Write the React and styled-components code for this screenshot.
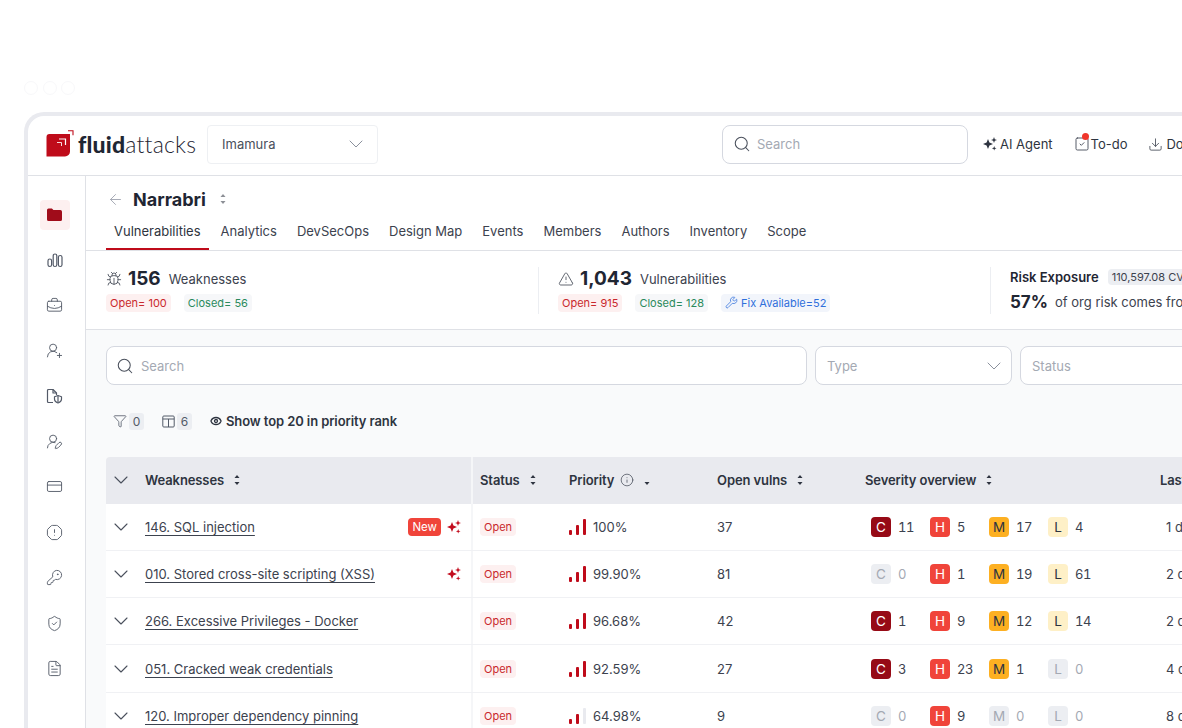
import React from 'react';
import styled, { createGlobalStyle } from 'styled-components';
import {
  ArrowLeft,
  BriefcaseBusiness,
  Bug,
  ChevronDown,
  CreditCard,
  Download,
  Eye,
  FileText,
  Funnel,
  Info,
  KeyRound,
  OctagonAlert,
  Search,
  ShieldCheck,
  SquareCheck,
  TriangleAlert,
  UserRoundPen,
  UserRoundPlus,
  Wrench,
} from 'lucide-react';

const GlobalStyle = createGlobalStyle`
  html, body {
    margin: 0;
    height: 728px;
    overflow: hidden;
    background: #fff;
    font-family: Inter, "Liberation Sans", sans-serif;
    color: #2e3440;
  }
  * { box-sizing: border-box; }
`;

const weaknesses = [
  { name: '146. SQL injection', isNew: true, ai: true, bars: 3, priority: '100%', open: 37, sev: [11, 5, 17, 4], last: '1 day' },
  { name: '010. Stored cross-site scripting (XSS)', ai: true, bars: 3, priority: '99.90%', open: 81, sev: [0, 1, 19, 61], last: '2 days' },
  { name: '266. Excessive Privileges - Docker', bars: 3, priority: '96.68%', open: 42, sev: [1, 9, 12, 14], last: '2 days' },
  { name: '051. Cracked weak credentials', bars: 3, priority: '92.59%', open: 27, sev: [3, 23, 1, 0], last: '4 days' },
  { name: '120. Improper dependency pinning', bars: 2, priority: '64.98%', open: 9, sev: [0, 9, 0, 0], last: '8 days' },
];

const tabs = ['Vulnerabilities', 'Analytics', 'DevSecOps', 'Design Map', 'Events', 'Members', 'Authors', 'Inventory', 'Scope'];
const levels = ['C', 'H', 'M', 'L'];

const BarsIcon = () => (
  <svg width="16" height="16" viewBox="0 0 16 16" fill="none" stroke="#535a68" strokeWidth="1.2">
    <rect x="1" y="7" width="3.6" height="7.5" rx="1.8" />
    <rect x="6.2" y="2" width="3.6" height="12.5" rx="1.8" />
    <rect x="11.4" y="3.5" width="3.6" height="11" rx="1.8" />
  </svg>
);

const FolderIcon = () => (
  <svg width="15" height="13" viewBox="0 0 15 13">
    <path d="M0 2a1.5 1.5 0 0 1 1.5-1.5h3.4l1.5 1.6h7A1.6 1.6 0 0 1 15 3.700v7.700A1.6 1.6 0 0 1 13.400 13H1.600A1.6 1.6 0 0 1 0 11.400z" fill="#a00c1a" />
  </svg>
);

const FileShieldIcon = () => (
  <svg width="17" height="16" viewBox="0 0 17 16" fill="none" stroke="#535a68" strokeWidth="1.2" strokeLinejoin="round">
    <path d="M7 14.500H2.500a1 1 0 0 1-1-1v-11a1 1 0 0 1 1-1H7l3.500 3.500v2" />
    <path d="M7 1.500V5h3.500" />
    <path d="M12 7.500l3.500 1.200v2.600c0 1.800-1.500 3-3.500 3.700-2-.7-3.500-1.900-3.500-3.700V8.700z" />
    <path d="M12 8v6" />
  </svg>
);

const SparkIcon = ({ size = 14, color = '#c30e1f' }) => (
  <svg width={size} height={size} viewBox="0 0 14 14" fill={color}>
    <path d="M5 2l1.400 3.600L10 7 6.400 8.400 5 12 3.600 8.400 0 7l3.600-1.400z" />
    <path d="M11 0l.8 2.200L14 3l-2.200.8L11 6l-.8-2.200L8 3l2.200-.8z" />
    <path d="M11.200 9l.6 1.700 1.700.6-1.700.6-.6 1.700-.6-1.700-1.700-.6 1.700-.6z" />
  </svg>
);

const SortIcon = ({ only }) => (
  <svg width="6" height="10" viewBox="0 0 6 10" fill="#2e3440">
    {!only && <path d="M3 0l2.500 3H.5z" />}
    <path d="M3 10L.5 7h5z" />
  </svg>
);

const ColumnsIcon = () => (
  <svg width="13" height="13" viewBox="0 0 13 13" fill="none" stroke="#535a68" strokeWidth="1">
    <rect x="0.8" y="1" width="11.4" height="11" rx="1" />
    <path d="M.8 4h11.400M6.500 4v8" />
  </svg>
);

const LogoMark = () => (
  <svg width="28" height="28" viewBox="0 0 28 28">
    <path d="M3.500 4H24v17.500a5 5 0 0 1-5 5H.5V7a3 3 0 0 1 3-3z" fill="#bf0b1a" />
    <path d="M22 .7h5v4.500" fill="none" stroke="#bf0b1a" strokeWidth="1.100" />
    <path d="M13 9h6.500v6" fill="none" stroke="#fff" strokeWidth="1.200" />
    <path d="M11 12.500h4.500V16" fill="none" stroke="#fff" strokeWidth="1" opacity="0.85" />
  </svg>
);

const SignalBars = ({ filled }) => (
  <Signal>
    {[5, 10, 16].map((height, i) => (
      <SignalBar key={height} $height={height} $on={i < filled} />
    ))}
  </Signal>
);

const App = () => (
  <>
    <GlobalStyle />
    <WindowDots>
      <Dot />
      <Dot />
      <Dot />
    </WindowDots>
    <Frame>
      <TopBar>
        <Logo>
          <LogoMark />
          <LogoText>
            <b>fluid</b>attacks
          </LogoText>
        </Logo>
        <OrgSelect>
          Imamura
          <ChevronDown size={24} color="#8b919d" strokeWidth={1} />
        </OrgSelect>
        <TopSearch>
          <Search size={18} color="#4a505c" strokeWidth={1.4} />
          Search
        </TopSearch>
        <TopLinks>
          <TopLink>
            <SparkIcon size={14} color="#2e3440" />
            AI Agent
          </TopLink>
          <TodoLink>
            <SquareCheck size={16} color="#4a505c" strokeWidth={1.4} />
            <RedDot />
            To-do
          </TodoLink>
          <TopLink>
            <Download size={15} color="#4a505c" strokeWidth={1.4} />
            Download
          </TopLink>
        </TopLinks>
      </TopBar>
      <Body>
        <SideNav>
          <NavActive>
            <FolderIcon />
          </NavActive>
          <NavItem><BarsIcon /></NavItem>
          <NavItem><BriefcaseBusiness size={17} strokeWidth={1.3} /></NavItem>
          <NavItem><UserRoundPlus size={17} strokeWidth={1.3} /></NavItem>
          <NavItem><FileShieldIcon /></NavItem>
          <NavItem><UserRoundPen size={17} strokeWidth={1.3} /></NavItem>
          <NavItem><CreditCard size={17} strokeWidth={1.3} /></NavItem>
          <NavItem><OctagonAlert size={17} strokeWidth={1.3} /></NavItem>
          <NavItem><KeyRound size={17} strokeWidth={1.3} /></NavItem>
          <NavItem><ShieldCheck size={17} strokeWidth={1.3} /></NavItem>
          <NavItem><FileText size={17} strokeWidth={1.3} /></NavItem>
        </SideNav>
        <Main>
          <PageHead>
            <TitleRow>
              <ArrowLeft size={17} color="#a0a5b0" strokeWidth={1.3} />
              <Title>Narrabri</Title>
              <SortIcon />
            </TitleRow>
            <Tabs>
              {tabs.map((tab, i) => (
                <Tab key={tab} $active={i === 0}>{tab}</Tab>
              ))}
            </Tabs>
          </PageHead>
          <Stats>
            <StatBlock>
              <StatTop>
                <Bug size={16} color="#4a505c" strokeWidth={1.3} />
                <StatNumber>156</StatNumber>
                <StatLabel>Weaknesses</StatLabel>
              </StatTop>
              <Pills>
                <Pill $kind="red">Open= 100</Pill>
                <Pill $kind="green">Closed= 56</Pill>
              </Pills>
            </StatBlock>
            <StatBlock $divided>
              <StatTop>
                <TriangleAlert size={16} color="#4a505c" strokeWidth={1.3} />
                <StatNumber>1,043</StatNumber>
                <StatLabel>Vulnerabilities</StatLabel>
              </StatTop>
              <Pills>
                <Pill $kind="red">Open= 915</Pill>
                <Pill $kind="green">Closed= 128</Pill>
                <Pill $kind="blue">
                  <Wrench size={13} strokeWidth={1.4} />
                  Fix Available=52
                </Pill>
              </Pills>
            </StatBlock>
            <StatBlock $divided>
              <RiskTop>
                <RiskLabel>Risk Exposure</RiskLabel>
                <RiskValue>110,597.08 CVSSF</RiskValue>
              </RiskTop>
              <RiskBottom>
                <RiskPercent>57%</RiskPercent>
                <StatLabel>of org risk comes from this group</StatLabel>
              </RiskBottom>
            </StatBlock>
          </Stats>
          <Content>
            <Filters>
              <FilterSearch>
                <Search size={18} color="#4a505c" strokeWidth={1.4} />
                Search
              </FilterSearch>
              <FilterSelect>
                Type
                <ChevronDown size={24} color="#8b919d" strokeWidth={1} />
              </FilterSelect>
              <FilterSelect>
                Status
                <ChevronDown size={24} color="#8b919d" strokeWidth={1} />
              </FilterSelect>
            </Filters>
            <Controls>
              <Funnel size={14} color="#535a68" strokeWidth={1.4} />
              <CountChip>0</CountChip>
              <ColumnsGap />
              <ColumnsIcon />
              <CountChip>6</CountChip>
              <ShowTop>
                <Eye size={12} color="#2e3440" strokeWidth={2.6} />
                Show top 20 in priority rank
              </ShowTop>
            </Controls>
            <Table>
              <HeadRow>
                <ExpandCell><ChevronDown size={24} color="#4a505c" strokeWidth={1.1} /></ExpandCell>
                <HeadCell>Weaknesses<SortIcon /></HeadCell>
                <HeadCell $divided>Status<SortIcon /></HeadCell>
                <HeadCell>
                  Priority
                  <Info size={14} color="#4a505c" strokeWidth={1.3} />
                  <SortIcon only />
                </HeadCell>
                <HeadCell>Open vulns<SortIcon /></HeadCell>
                <HeadCell>Severity overview<SortIcon /></HeadCell>
                <HeadCell>Last report<SortIcon /></HeadCell>
              </HeadRow>
              {weaknesses.map((row) => (
                <Row key={row.name}>
                  <ExpandCell><ChevronDown size={24} color="#4a505c" strokeWidth={1.1} /></ExpandCell>
                  <NameCell>
                    <NameLink>{row.name}</NameLink>
                    {row.isNew && <NewBadge>New</NewBadge>}
                    {row.ai && <SparkIcon />}
                  </NameCell>
                  <Cell $divided><OpenTag>Open</OpenTag></Cell>
                  <PriorityCell>
                    <SignalBars filled={row.bars} />
                    {row.priority}
                  </PriorityCell>
                  <Cell>{row.open}</Cell>
                  <SeverityCell>
                    {row.sev.map((count, i) => (
                      <SevItem key={levels[i]}>
                        <SevBadge $level={count === 0 ? 'none' : levels[i]}>{levels[i]}</SevBadge>
                        <SevCount $muted={count === 0}>{count}</SevCount>
                      </SevItem>
                    ))}
                  </SeverityCell>
                  <LastCell>{row.last}</LastCell>
                </Row>
              ))}
            </Table>
          </Content>
        </Main>
      </Body>
    </Frame>
  </>
);

const WindowDots = styled.div`
  display: flex;
  gap: 4.500px;
  padding: 81px 0 0 24px;
  height: 112px;
`;

const Dot = styled.span`
  width: 14px;
  height: 14px;
  border-radius: 50%;
  border: 1px solid #f8f8fa;
`;

const Frame = styled.div`
  width: 1500px;
  height: 800px;
  margin-left: 24px;
  border: 4px solid #e9eaef;
  border-right: 0;
  border-bottom: 0;
  border-top-left-radius: 20px;
  background: #fff;
`;

const TopBar = styled.header`
  display: flex;
  align-items: center;
  height: 60px;
  padding: 0 0 3px 18px;
  border-bottom: 1px solid #dfe1e6;
`;

const Logo = styled.div`
  display: flex;
  align-items: center;
  gap: 4px;
  width: 161px;
`;

const LogoText = styled.span`
  font-family: Lato, sans-serif;
  font-size: 23px;
  font-weight: 300;
  letter-spacing: 0.2px;
  color: #1f2633;
  b { font-weight: 900; }
`;

const OrgSelect = styled.div`
  display: flex;
  align-items: center;
  justify-content: space-between;
  width: 171px;
  height: 39px;
  padding: 0 9px 0 14px;
  border: 1px solid #eef0f3;
  border-radius: 4px;
  font-size: 13px;
  color: #4a505c;
`;

const TopSearch = styled.div`
  display: flex;
  align-items: center;
  gap: 6px;
  width: 246px;
  height: 39px;
  margin-left: 344px;
  padding: 0 10px;
  border: 1px solid #d5d8e0;
  border-radius: 8px;
  font-size: 13px;
  color: #a4a9b3;
`;

const TopLinks = styled.nav`
  display: flex;
  align-items: center;
  margin-left: 15px;
  gap: 21px;
`;

const TopLink = styled.span`
  display: flex;
  align-items: center;
  gap: 3px;
  font-size: 13px;
  color: #2e3440;
`;

const TodoLink = styled(TopLink)`
  position: relative;
  gap: 1px;
`;

const RedDot = styled.span`
  position: absolute;
  left: 8px;
  top: -3px;
  width: 7px;
  height: 7px;
  border-radius: 50%;
  background: #f0352b;
`;

const Body = styled.div`
  display: flex;
  height: 740px;
`;

const SideNav = styled.aside`
  display: flex;
  flex-direction: column;
  align-items: center;
  width: 58px;
  flex: none;
  padding: 23.500px 4px 0 0;
  border-right: 1px solid #dfe1e6;
`;

const NavItem = styled.div`
  display: flex;
  align-items: center;
  justify-content: center;
  width: 30px;
  height: 30px;
  margin-bottom: 15.400px;
  color: #535a68;
`;

const NavActive = styled(NavItem)`
  border-radius: 4px;
  background: #fdf0f0;
`;

const Main = styled.main`
  flex: 1;
  min-width: 0;
`;

const PageHead = styled.div`
  height: 75px;
  border-bottom: 1px solid #dfe1e6;
`;

const TitleRow = styled.div`
  display: flex;
  align-items: center;
  height: 44px;
  padding: 2px 0 0 21px;
  svg:last-child { margin-left: 14px; opacity: 0.55; }
`;

const Title = styled.h1`
  margin: 0 0 0 9px;
  font-size: 18px;
  font-weight: 700;
  color: #1f2633;
`;

const Tabs = styled.div`
  display: flex;
  gap: 4px;
  padding-left: 20px;
`;

const Tab = styled.div`
  height: 30px;
  padding: 3px 8px 0;
  font-size: 13px;
  color: ${(props) => (props.$active ? '#2e3440' : '#3c424e')};
  border-bottom: 2px solid ${(props) => (props.$active ? '#bf0b1a' : 'transparent')};
`;

const Stats = styled.div`
  display: grid;
  grid-template-columns: 432px 452px 1fr;
  align-items: center;
  height: 79px;
  padding-left: 20px;
  border-bottom: 1px solid #dfe1e6;
`;

const StatBlock = styled.div`
  display: flex;
  flex-direction: column;
  gap: 3px;
  height: 47px;
  padding-left: ${(props) => (props.$divided ? '19px' : '0')};
  border-left: ${(props) => (props.$divided ? '1px solid #eceef2' : '0')};
`;

const StatTop = styled.div`
  display: flex;
  align-items: center;
  gap: 6px;
  height: 24px;
`;

const StatNumber = styled.span`
  font-size: 19px;
  font-weight: 700;
  color: #1f2633;
  margin-right: 2px;
`;

const StatLabel = styled.span`
  font-size: 13px;
  color: #3c424e;
`;

const Pills = styled.div`
  display: flex;
  align-items: center;
  gap: 13px;
`;

const pillColors = {
  red: ['#fdf0f0', '#c9282d'],
  green: ['#f6f7f9', '#2a8a5c'],
  blue: ['#f2f5fb', '#2f6fdb'],
};

const Pill = styled.span`
  display: inline-flex;
  align-items: center;
  gap: 3px;
  height: 18px;
  padding: 0 4px;
  border-radius: 4px;
  font-size: 11px;
  background: ${(props) => pillColors[props.$kind][0]};
  color: ${(props) => pillColors[props.$kind][1]};
`;

const RiskTop = styled.div`
  display: flex;
  align-items: center;
  gap: 9px;
  height: 20px;
`;

const RiskLabel = styled.span`
  font-size: 13px;
  font-weight: 600;
  color: #1f2633;
`;

const RiskValue = styled.span`
  padding: 1px 4px;
  border-radius: 4px;
  background: #eceef2;
  font-size: 11px;
  color: #3c424e;
`;

const RiskBottom = styled.div`
  display: flex;
  align-items: center;
  gap: 7px;
  margin-top: 2px;
`;

const RiskPercent = styled.span`
  font-size: 17px;
  font-weight: 700;
  color: #1f2633;
`;

const Content = styled.div`
  background: #f9fafb;
  height: 500px;
  padding: 16px 0 0 20px;
`;

const Filters = styled.div`
  display: flex;
  gap: 8px;
`;

const fieldBox = styled.div`
  display: flex;
  align-items: center;
  height: 39px;
  background: #fff;
  border: 1px solid #d5d8e0;
  border-radius: 8px;
  font-size: 13px;
  color: #a4a9b3;
`;

const FilterSearch = styled(fieldBox)`
  gap: 7px;
  width: 701px;
  padding: 0 9px;
`;

const FilterSelect = styled(fieldBox)`
  justify-content: space-between;
  width: 197px;
  padding: 0 5px 0 11px;
`;

const Controls = styled.div`
  display: flex;
  align-items: center;
  height: 22px;
  margin-top: 25px;
  padding-left: 7px;
`;

const CountChip = styled.span`
  display: inline-flex;
  align-items: center;
  justify-content: center;
  width: 15px;
  height: 17px;
  margin-left: 2px;
  border-radius: 3px;
  background: #eceef2;
  font-size: 12px;
  color: #535a68;
`;

const ColumnsGap = styled.span`
  width: 18px;
`;

const ShowTop = styled.span`
  display: flex;
  align-items: center;
  gap: 4px;
  margin-left: 18px;
  font-size: 13px;
  font-weight: 600;
  letter-spacing: -0.1px;
  color: #2e3440;
`;

const Table = styled.div`
  margin-top: 25px;
  border-top-left-radius: 4px;
  overflow: hidden;
`;

const columns = '39px 326px 98px 148px 148px 295px 200px';

const HeadRow = styled.div`
  display: grid;
  grid-template-columns: ${columns};
  align-items: center;
  height: 46.500px;
  background: #e9eaef;
`;

const Row = styled.div`
  display: grid;
  grid-template-columns: ${columns};
  align-items: center;
  height: 47.300px;
  background: #fff;
  border-bottom: 1px solid #f0f1f4;
`;

const ExpandCell = styled.div`
  display: flex;
  justify-content: center;
  align-items: center;
  padding-right: 9px;
  height: 100%;
`;

const HeadCell = styled.div`
  display: flex;
  align-items: center;
  gap: 6px;
  height: 100%;
  padding-left: ${(props) => (props.$divided ? '7px' : '0')};
  border-left: ${(props) => (props.$divided ? '2px solid #f5f6f8' : '0')};
  font-size: 13px;
  font-weight: 600;
  letter-spacing: -0.1px;
  color: #2e3440;
  svg:last-child { margin-left: 4px; }
`;

const Cell = styled.div`
  display: flex;
  align-items: center;
  height: 100%;
  padding-left: ${(props) => (props.$divided ? '7px' : '0')};
  border-left: ${(props) => (props.$divided ? '2px solid #f5f6f8' : '0')};
  font-size: 13px;
  color: #3c424e;
`;

const LastCell = styled(Cell)`
  padding-left: 6px;
`;

const NameCell = styled(Cell)`
  gap: 6px;
  padding-right: 10px;
`;

const NameLink = styled.span`
  margin-right: auto;
  text-decoration: underline;
  text-underline-offset: 3px;
  color: #3c424e;
`;

const NewBadge = styled.span`
  padding: 2px 4px;
  border-radius: 4px;
  background: #f0443a;
  font-size: 11.500px;
  line-height: 14px;
  color: #fff;
`;

const OpenTag = styled.span`
  padding: 2px 4px;
  border-radius: 4px;
  background: #fdf0f0;
  font-size: 11px;
  line-height: 14px;
  color: #c9282d;
`;

const PriorityCell = styled(Cell)`
  gap: 7px;
`;

const Signal = styled.span`
  display: inline-flex;
  align-items: flex-end;
  gap: 4px;
  height: 16px;
`;

const SignalBar = styled.span`
  width: 3px;
  height: ${(props) => props.$height}px;
  border-radius: 1px;
  background: ${(props) => (props.$on ? '#bf0b1a' : '#e9eaef')};
`;

const SeverityCell = styled(Cell)`
  padding-left: 6px;
`;

const SevItem = styled.div`
  display: flex;
  align-items: center;
  gap: 7px;
  width: 59px;
`;

const sevColors = {
  C: ['#960a16', '#fff'],
  H: ['#f0443a', '#fff'],
  M: ['#fdb022', '#2e3440'],
  L: ['#fef0c7', '#2e3440'],
  none: ['#eceef2', '#a4a9b3'],
};

const SevBadge = styled.span`
  display: flex;
  align-items: center;
  justify-content: center;
  width: 20px;
  height: 20px;
  border-radius: 4px;
  font-size: 13.500px;
  background: ${(props) => sevColors[props.$level][0]};
  color: ${(props) => sevColors[props.$level][1]};
`;

const SevCount = styled.span`
  font-variant-numeric: tabular-nums;
  letter-spacing: -0.4px;
  color: ${(props) => (props.$muted ? '#a4a9b3' : '#3c424e')};
`;

export default App;
